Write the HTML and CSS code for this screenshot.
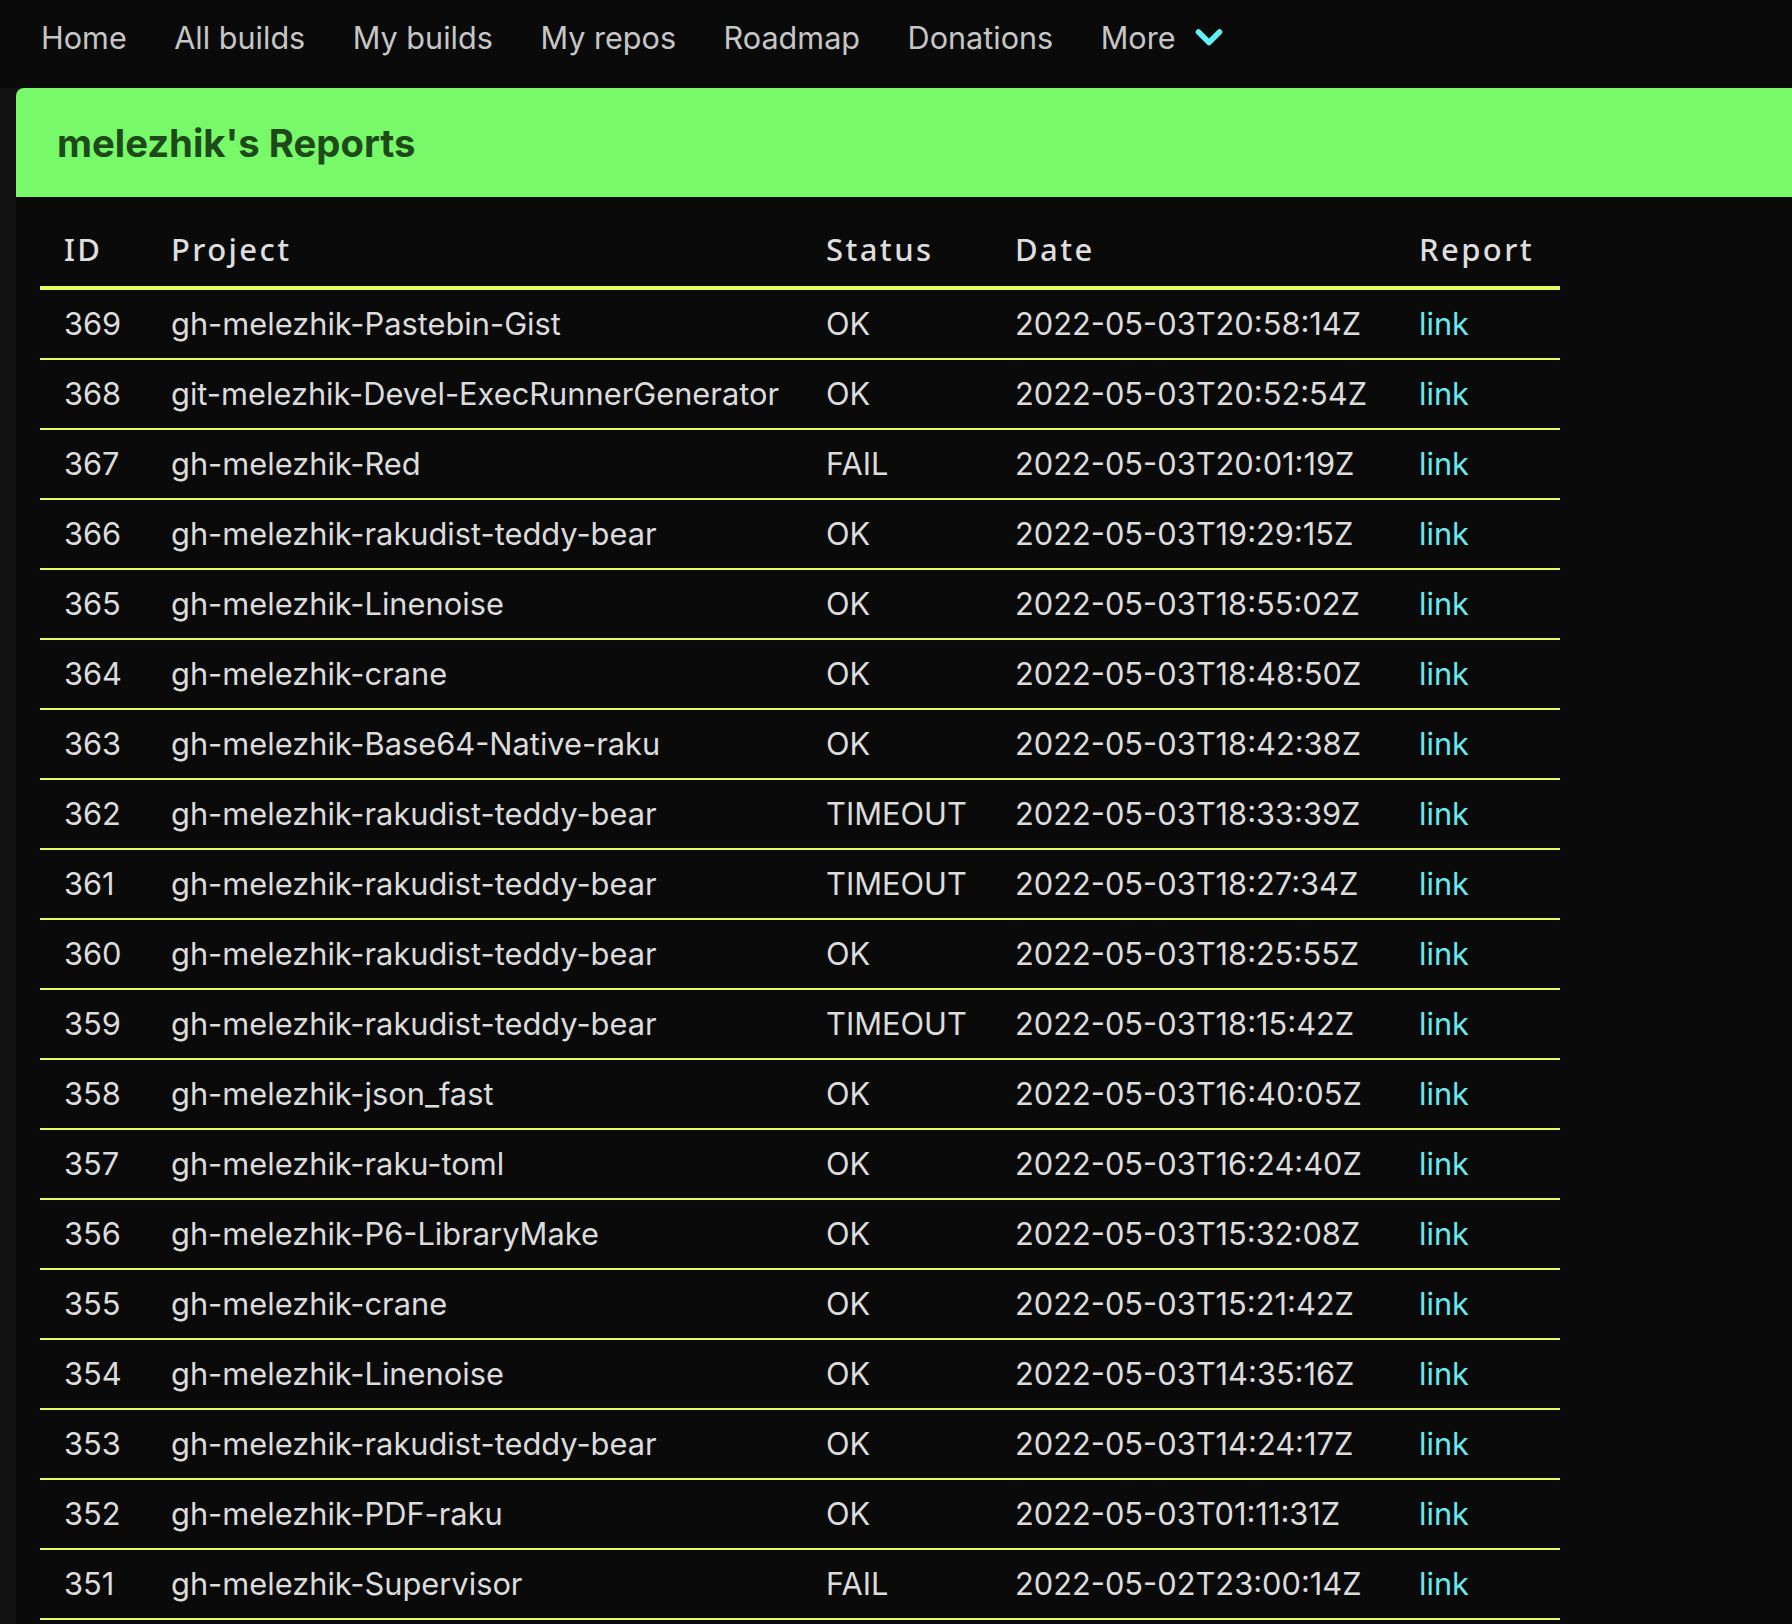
FILE: index.html
```html
<!DOCTYPE html>
<html>
<head>
<meta charset="utf-8">
<title>melezhik's Reports</title>
<link rel="stylesheet" href="styles.css">
</head>
<body>
<nav class="navbar">
  <a class="nav-item">Home</a>
  <a class="nav-item">All builds</a>
  <a class="nav-item">My builds</a>
  <a class="nav-item">My repos</a>
  <a class="nav-item">Roadmap</a>
  <a class="nav-item">Donations</a>
  <a class="nav-item nav-more">More
    <svg class="chevron" width="28" height="28" viewBox="0 0 28 28"><polyline points="3.5,9 14,19.5 24.5,9" fill="none" stroke="#5ef0f4" stroke-width="5.5" stroke-linejoin="round" stroke-linecap="round"/></svg>
  </a>
</nav>
<div class="page">
  <div class="card">
    <div class="banner"><h1 class="title">melezhik's Reports</h1></div>
    <table class="reports">
      <thead>
        <tr><th class="c-id">ID</th><th class="c-proj">Project</th><th class="c-status">Status</th><th class="c-date">Date</th><th class="c-rep">Report</th></tr>
      </thead>
      <tbody>
        <tr><td>369</td><td>gh-melezhik-Pastebin-Gist</td><td>OK</td><td>2022-05-03T20:58:14Z</td><td><a class="link">link</a></td></tr>
        <tr><td>368</td><td>git-melezhik-Devel-ExecRunnerGenerator</td><td>OK</td><td>2022-05-03T20:52:54Z</td><td><a class="link">link</a></td></tr>
        <tr><td>367</td><td>gh-melezhik-Red</td><td>FAIL</td><td>2022-05-03T20:01:19Z</td><td><a class="link">link</a></td></tr>
        <tr><td>366</td><td>gh-melezhik-rakudist-teddy-bear</td><td>OK</td><td>2022-05-03T19:29:15Z</td><td><a class="link">link</a></td></tr>
        <tr><td>365</td><td>gh-melezhik-Linenoise</td><td>OK</td><td>2022-05-03T18:55:02Z</td><td><a class="link">link</a></td></tr>
        <tr><td>364</td><td>gh-melezhik-crane</td><td>OK</td><td>2022-05-03T18:48:50Z</td><td><a class="link">link</a></td></tr>
        <tr><td>363</td><td>gh-melezhik-Base64-Native-raku</td><td>OK</td><td>2022-05-03T18:42:38Z</td><td><a class="link">link</a></td></tr>
        <tr><td>362</td><td>gh-melezhik-rakudist-teddy-bear</td><td>TIMEOUT</td><td>2022-05-03T18:33:39Z</td><td><a class="link">link</a></td></tr>
        <tr><td>361</td><td>gh-melezhik-rakudist-teddy-bear</td><td>TIMEOUT</td><td>2022-05-03T18:27:34Z</td><td><a class="link">link</a></td></tr>
        <tr><td>360</td><td>gh-melezhik-rakudist-teddy-bear</td><td>OK</td><td>2022-05-03T18:25:55Z</td><td><a class="link">link</a></td></tr>
        <tr><td>359</td><td>gh-melezhik-rakudist-teddy-bear</td><td>TIMEOUT</td><td>2022-05-03T18:15:42Z</td><td><a class="link">link</a></td></tr>
        <tr><td>358</td><td>gh-melezhik-json_fast</td><td>OK</td><td>2022-05-03T16:40:05Z</td><td><a class="link">link</a></td></tr>
        <tr><td>357</td><td>gh-melezhik-raku-toml</td><td>OK</td><td>2022-05-03T16:24:40Z</td><td><a class="link">link</a></td></tr>
        <tr><td>356</td><td>gh-melezhik-P6-LibraryMake</td><td>OK</td><td>2022-05-03T15:32:08Z</td><td><a class="link">link</a></td></tr>
        <tr><td>355</td><td>gh-melezhik-crane</td><td>OK</td><td>2022-05-03T15:21:42Z</td><td><a class="link">link</a></td></tr>
        <tr><td>354</td><td>gh-melezhik-Linenoise</td><td>OK</td><td>2022-05-03T14:35:16Z</td><td><a class="link">link</a></td></tr>
        <tr><td>353</td><td>gh-melezhik-rakudist-teddy-bear</td><td>OK</td><td>2022-05-03T14:24:17Z</td><td><a class="link">link</a></td></tr>
        <tr><td>352</td><td>gh-melezhik-PDF-raku</td><td>OK</td><td>2022-05-03T01:11:31Z</td><td><a class="link">link</a></td></tr>
        <tr><td>351</td><td>gh-melezhik-Supervisor</td><td>FAIL</td><td>2022-05-02T23:00:14Z</td><td><a class="link">link</a></td></tr>
      </tbody>
    </table>
  </div>
</div>
</body>
</html>
```
FILE: styles.css
```css
html, body {
  margin: 0;
  padding: 0;
  background: #0a0a0a;
  overflow: hidden;
}
body {
  font-family: Inter, "Noto Sans", sans-serif;
  color: #dcdcdc;
  height: 1624px;
}
.navbar {
  display: flex;
  align-items: center;
  gap: 47.5px;
  height: 74px;
  padding-left: 41px;
  margin-bottom: 14px;
}
.nav-item {
  font-size: 30.6px;
  color: #c6c6c6;
  display: flex;
  align-items: center;
  gap: 19px;
}
.chevron {
  display: block;
}
.page {
  background: #121212;
  padding-left: 16px;
  height: 1536px;
}
.card {
  background: #0a0a0a;
  border-top-left-radius: 8px;
  height: 100%;
}
.banner {
  background: #78f96a;
  border-top-left-radius: 8px;
  height: 109px;
  display: flex;
  align-items: center;
  padding-left: 41px;
}
.title {
  margin: 0;
  font-size: 38.3px;
  font-weight: 700;
  color: #1e4a1a;
  letter-spacing: 0;
}
.reports {
  margin-left: 24px;
  margin-top: 16px;
  border-collapse: collapse;
  table-layout: fixed;
  width: 1520px;
}
.reports th {
  font-family: "Noto Sans", sans-serif;
  font-weight: 500;
  font-size: 31px;
  letter-spacing: 2.4px;
  color: #dedede;
  text-align: left;
  padding: 18px 24px;
  line-height: 37px;
  border-bottom: 4px solid #e6fc5c;
}
.c-id { width: 59px; }
.c-proj { width: 607px; }
.c-status { width: 141px; }
.c-date { width: 356px; }
.c-rep { width: 117px; }
.reports td {
  font-size: 30.8px;
  color: #dcdcdc;
  padding: 16px 24px;
  line-height: 36px;
  border-bottom: 2px solid #e6fc5c;
  white-space: nowrap;
}
.link {
  color: #6ae8ef;
}
```
